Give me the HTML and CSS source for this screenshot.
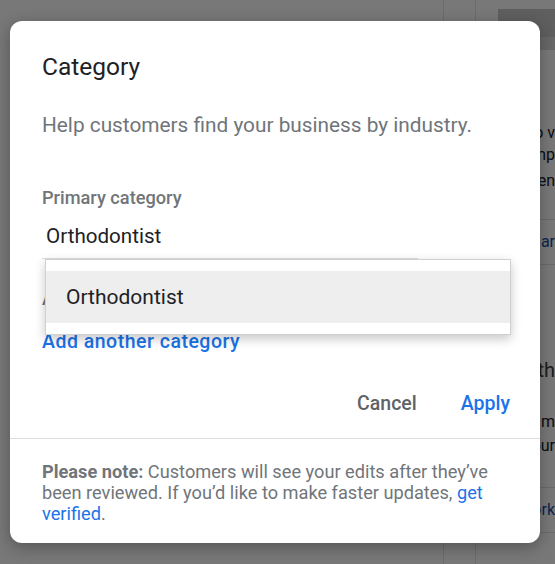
FILE: index.html
```html
<!DOCTYPE html>
<html lang="en">
<head>
    <meta charset="UTF-8">
    <meta name="viewport" content="width=device-width, initial-scale=1.0">
    <title>Category</title>
    <link rel="stylesheet" href="styles.css">
</head>
<body>
    <!-- page behind the dialog, dimmed by the scrim -->
    <div class="backdrop">
        <div class="backdrop-main"></div>
        <div class="backdrop-side">
            <div class="side-top"></div>
            <p class="side-line l1">Add photos to v</p>
            <p class="side-line l2">Customers comp</p>
            <p class="side-line l3">when they've seen</p>
            <p class="side-link">Edit calendar</p>
            <p class="side-line l4">Share something with</p>
            <p class="side-line l5">Post updates and m</p>
            <p class="side-line l6">Let customers know your</p>
            <p class="side-link l7">Learn how it will work</p>
        </div>
    </div>
    <div class="scrim"></div>

    <div class="dialog">
        <div class="dialog-body">
            <h2 class="dialog-title">Category</h2>
            <p class="dialog-intro">Help customers find your business by industry.</p>

            <label class="field-label">Primary category</label>
            <div class="field-input">Orthodontist</div>

            <p class="field-label hidden-label">Additional categories</p>
            <a class="add-link" href="#">Add another category</a>

            <div class="actions">
                <button class="btn btn-cancel">Cancel</button>
                <button class="btn btn-apply">Apply</button>
            </div>
        </div>

        <div class="dialog-note">
            <p><b>Please note:</b> Customers will see your edits after they’ve been reviewed. If you’d like to make faster updates, <a href="#">get verified</a>.</p>
        </div>

        <!-- autocomplete menu over the field -->
        <ul class="suggest">
            <li class="suggest-item active">Orthodontist</li>
        </ul>
    </div>
</body>
</html>
```

FILE: styles.css
```css
:root {
    --text-dark: #202124;
    --text-grey: #5f6368;
    --text-light: #70757a;
    --blue: #1a73e8;
    --divider: #dadce0;
}

body {
    margin: 0;
    width: 555px;
    height: 564px;
    overflow: hidden;
    position: relative;
    font-family: Roboto, "Noto Sans", sans-serif;
    background: #fff;
}

/* backdrop page */
.backdrop {
    display: flex;
    height: 100%;
}

.backdrop-main {
    width: 445px;
    border-right: 1px solid #e4e4e4;
}

.backdrop-side {
    flex: 1;
    margin-left: 31px;
    border-left: 1px solid #e4e4e4;
    font-size: 16px;
    color: #202124;
}

.side-top {
    height: 28px;
    margin: 9px 0 0 22px;
    background: #c9c9c9;
    border-bottom: 13px solid #dedede;
}

.side-line,
.side-link {
    margin: 0;
    width: 79px;
    line-height: 24px;
    white-space: nowrap;
    overflow: hidden;
    direction: rtl;
    text-align: right;
}

.l1 { margin-top: 71px; }
.l2 { margin-top: -2px; }
.l3 { margin-top: 2px; }

.side-link {
    margin-top: 26px;
    padding: 10px 0;
    color: #174ea6;
    border-top: 1px solid #e4e4e4;
    border-bottom: 1px solid #e4e4e4;
}

.l4 { margin-top: 93px; font-size: 20px; color: #3c4043; }
.l5 { margin-top: 28px; }
.l7 { margin-top: 29px; }

.scrim {
    position: absolute;
    inset: 0;
    background: rgba(0, 0, 0, 0.53);
}

/* dialog */
.dialog {
    position: absolute;
    left: 10px;
    top: 21px;
    width: 530px;
    height: 522px;
    background: #fff;
    border-radius: 12px;
    box-shadow: 0 4px 16px rgba(0, 0, 0, 0.3);
    display: flex;
    flex-direction: column;
}

.dialog-body {
    padding: 32px 32px 0;
}

.dialog-title {
    margin: 0;
    font-size: 24.5px;
    font-weight: 400;
    line-height: 28px;
    color: var(--text-dark);
}

.dialog-intro {
    margin: 32px 0 0;
    font-size: 20.8px;
    line-height: 24px;
    color: var(--text-light);
}

.field-label {
    display: block;
    margin-top: 51px;
    font-size: 18.2px;
    font-weight: 500;
    line-height: 20px;
    color: var(--text-light);
}

.field-input {
    width: 372px;
    margin-top: 16px;
    padding: 0 0 10px 4px;
    border-bottom: 1px solid var(--divider);
    font-size: 20.6px;
    line-height: 24px;
    color: var(--text-dark);
}

.hidden-label {
    margin: 30px 0 0;
}

.add-link {
    display: inline-block;
    margin-top: 21px;
    font-size: 19.5px;
    font-weight: 500;
    letter-spacing: 0.5px;
    line-height: 24px;
    color: var(--blue);
    text-decoration: none;
}

.actions {
    display: flex;
    justify-content: flex-end;
    gap: 44px;
    margin: 38px -2px 0 0;
    padding-bottom: 22px;
}

.btn {
    border: none;
    background: none;
    padding: 0;
    font-family: inherit;
    font-size: 19.5px;
    font-weight: 500;
    line-height: 24px;
    cursor: pointer;
}

.btn-cancel { color: var(--text-grey); }
.btn-apply { color: var(--blue); }

.dialog-note {
    border-top: 1px solid var(--divider);
    padding: 22px 32px 0;
}

.dialog-note p {
    margin: 0;
    font-size: 18.2px;
    line-height: 21px;
    color: var(--text-light);
}

.dialog-note b {
    font-weight: 700;
}

.dialog-note a {
    color: var(--blue);
    text-decoration: none;
}

/* autocomplete menu */
.suggest {
    position: absolute;
    left: 35px;
    top: 238px;
    width: 464px;
    margin: 0;
    padding: 11px 0;
    list-style: none;
    background: #fff;
    border: 1px solid #d0d0d0;
    box-shadow: 0 4px 10px rgba(0, 0, 0, 0.22);
}

.suggest-item {
    height: 52px;
    padding-left: 20px;
    font-size: 21px;
    line-height: 52px;
    color: var(--text-dark);
}

.suggest-item.active {
    background: #eeeeee;
}
```
